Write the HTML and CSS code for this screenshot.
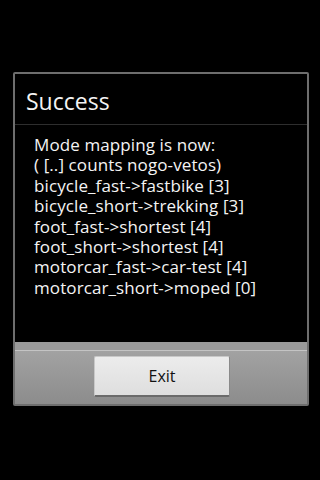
FILE: index.html
```html
<!DOCTYPE html>
<html>
<head>
<meta charset="utf-8">
<link rel="stylesheet" href="styles.css">
</head>
<body>
<div class="screen">
  <div class="dialog">
    <div class="title">Success</div>
    <div class="content">
      <div>Mode mapping is now:</div>
      <div>( [..] counts nogo-vetos)</div>
      <div>bicycle_fast-&gt;fastbike [3]</div>
      <div>bicycle_short-&gt;trekking [3]</div>
      <div>foot_fast-&gt;shortest [4]</div>
      <div>foot_short-&gt;shortest [4]</div>
      <div>motorcar_fast-&gt;car-test [4]</div>
      <div>motorcar_short-&gt;moped [0]</div>
    </div>
    <div class="buttons">
      <div class="btn">Exit</div>
    </div>
  </div>
</div>
</body>
</html>
```
FILE: styles.css
```css
html, body {
  margin: 0;
  padding: 0;
  background: #000;
}
.screen {
  width: 320px;
  height: 480px;
  padding-top: 72px;
  padding-left: 13px;
  box-sizing: border-box;
  font-family: "Open Sans", "Noto Sans", sans-serif;
}
.dialog {
  width: 296px;
  height: 334px;
  box-sizing: border-box;
  border: 2px solid #6e6e6e;
  border-radius: 2px;
  background: #000;
  display: flex;
  flex-direction: column;
}
.title {
  height: 51px;
  box-sizing: border-box;
  border-bottom: 1px solid #2e2e2e;
  color: #f4f4f4;
  font-size: 23px;
  line-height: 54px;
  padding-left: 11px;
}
.content {
  flex: 1;
  padding: 10px 0 0 19px;
  color: #f4f4f4;
  font-size: 17px;
  line-height: 20.4px;
  letter-spacing: 0.1px;
}
.buttons {
  height: 62px;
  box-sizing: border-box;
  background: linear-gradient(#9a9a9a 0, #9a9a9a 8px, #c4c4c4 8px, #c4c4c4 9px, #a2a2a2 9px, #8c8c8c 100%);
  display: flex;
  justify-content: center;
  padding-top: 14px;
}
.btn {
  width: 136px;
  height: 41px;
  margin-left: 2px;
  box-sizing: border-box;
  background: linear-gradient(#ececec, #dedede);
  border: 1px solid #c8c8c8;
  border-bottom: 2px solid #6a6a6a;
  border-right: 1px solid #8a8a8a;
  border-radius: 2px;
  color: #111;
  font-size: 16px;
  display: flex;
  align-items: center;
  justify-content: center;
}
```
